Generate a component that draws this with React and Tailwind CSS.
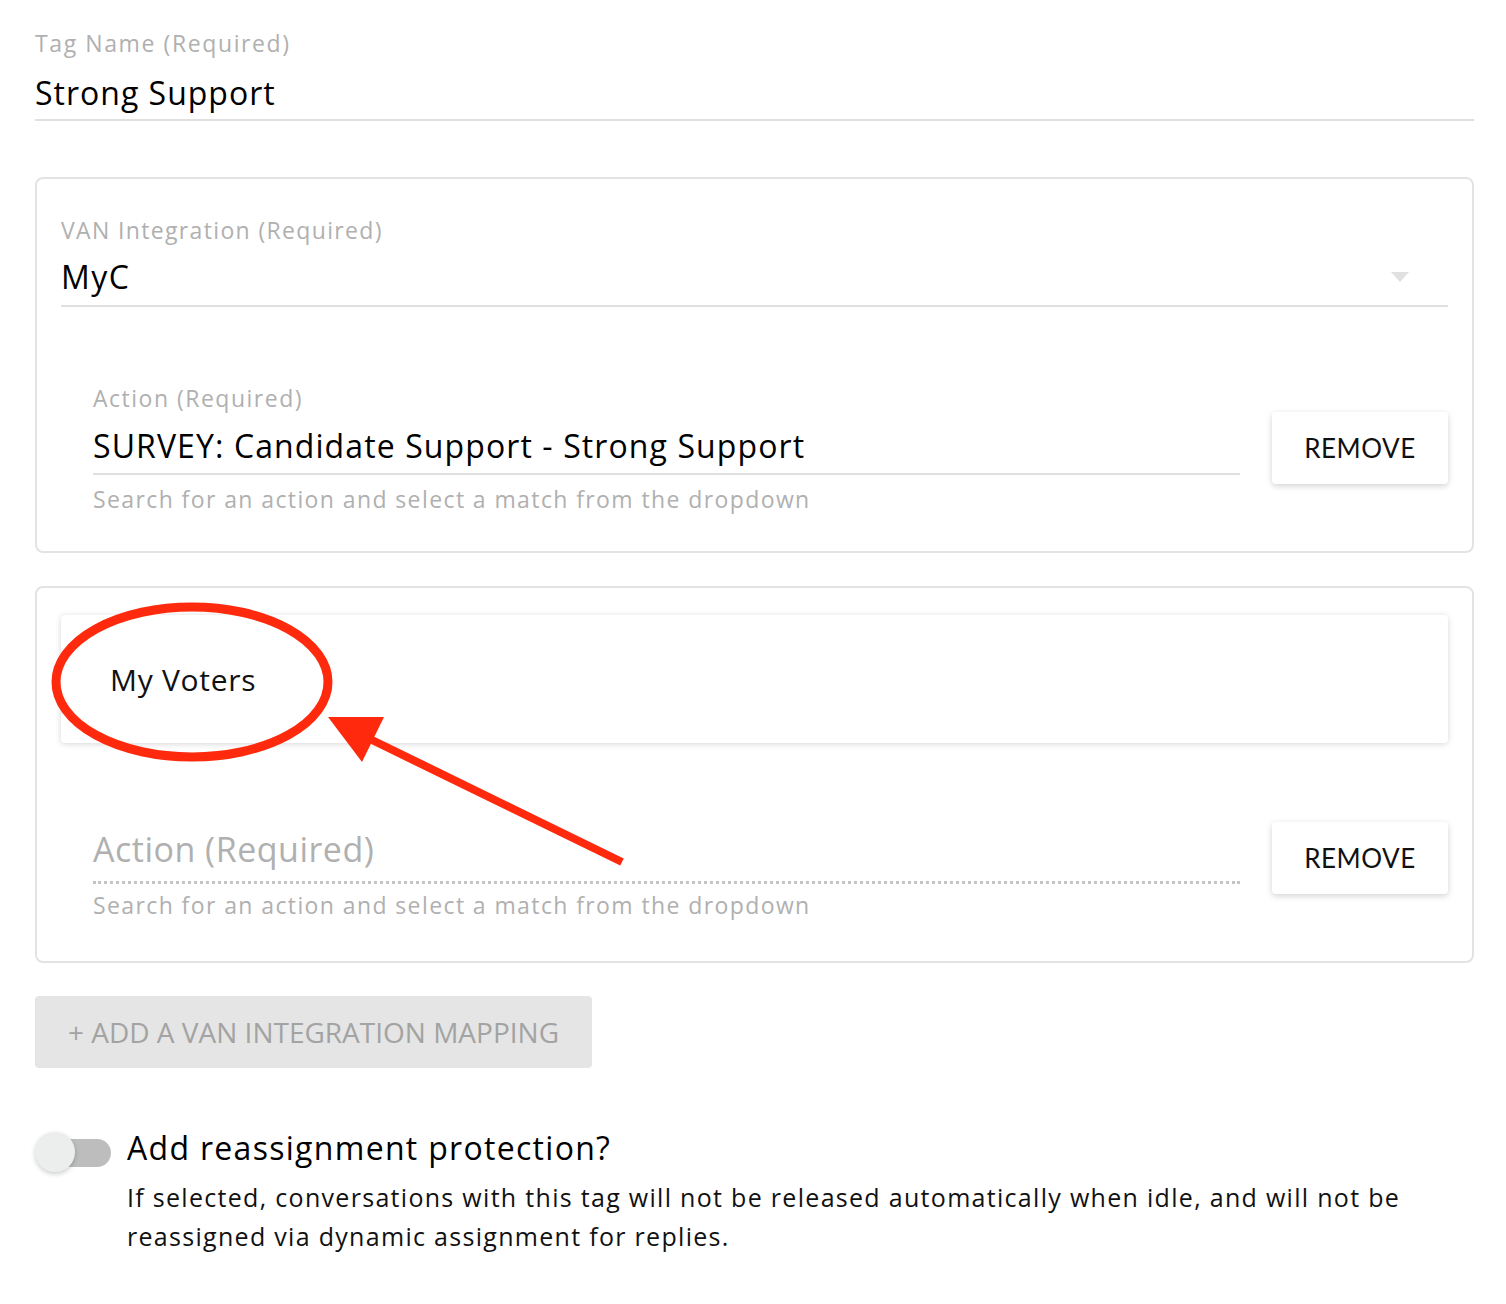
import React from "react";

const font = { fontFamily: '"Open Sans", "Liberation Sans", sans-serif' };

function RemoveButton() {
  return (
    <button className="w-[176px] h-[72px] shrink-0 bg-white rounded-[4px] shadow-[0_2px_6px_rgba(0,0,0,0.18)] text-[26px] text-[#111] tracking-[0.5px] font-['Lato',sans-serif]">
      REMOVE
    </button>
  );
}

function ActionRow({ value }) {
  return (
    <div className="flex items-start gap-[32px] pl-[32px]">
      <div className="flex-1">
        {value ? (
          <>
            <div className="text-[23px] text-[#b0b0b0] leading-[30px] tracking-[1.5px]">Action (Required)</div>
            <div className="text-[32px] text-black leading-[40px] tracking-[1.1px] mt-[13px] pb-[7px] border-b-2 border-[#e0e0e0]">{value}</div>
          </>
        ) : (
          <div className="pt-[6px]">
            <div className="text-[34px] text-[#b0b0b0] leading-[42px] tracking-[0.5px] pb-[11px] border-b-[3px] border-dotted border-[#c4c4c4]">Action (Required)</div>
          </div>
        )}
        <div className={`text-[23px] text-[#b0b0b0] leading-[30px] tracking-[1.4px] ${value ? "mt-[9px]" : "mt-[6px]"}`}>Search for an action and select a match from the dropdown</div>
      </div>
      <div className={value ? "pt-[29px]" : "pt-[0px]"}>
        <RemoveButton />
      </div>
    </div>
  );
}

export default function App() {
  return (
    <div className="relative w-[1506px] h-[1304px] bg-white" style={font}>
      <div className="px-[35px] pt-[28px] w-[1509px]">
        <div className="w-[1439px]">
          <div className="text-[23px] text-[#b0b0b0] leading-[30px] tracking-[1.6px]">Tag Name (Required)</div>
          <div className="text-[32px] text-black leading-[40px] tracking-[1px] mt-[15px] pb-[6px] border-b-2 border-[#e0e0e0]">Strong Support</div>

          <div className="mt-[56px] border-2 border-[#e2e4e3] rounded-[8px] pl-[24px] pr-[24px] pt-[36px] pb-[37px]">
            <div className="text-[23px] text-[#b0b0b0] leading-[30px] tracking-[1.35px]">VAN Integration (Required)</div>
            <div className="flex items-center justify-between mt-[12px] pb-[8px] border-b-2 border-[#e0e0e0]">
              <span className="text-[32px] text-black leading-[40px] tracking-[1.5px]">MyC</span>
              <svg width="20" height="12" viewBox="0 0 20 12" className="mr-[38px]"><path d="M1 1h18l-9 10z" fill="#e0e0e0" /></svg>
            </div>
            <div className="mt-[76px]">
              <ActionRow value="SURVEY: Candidate Support - Strong Support" />
            </div>
          </div>

          <div className="mt-[33px] border-2 border-[#e2e4e3] rounded-[8px] pl-[24px] pr-[24px] pt-[27px] pb-[41px]">
            <div className="h-[128px] rounded-[4px] bg-white shadow-[0_1px_6px_rgba(0,0,0,0.16)] flex items-center pl-[49px]">
              <span className="text-[30px] text-[#111] tracking-[0.7px]">My Voters</span>
            </div>
            <div className="mt-[79px]">
              <ActionRow />
            </div>
          </div>

          <button className="mt-[33px] h-[72px] w-[557px] rounded-[4px] bg-[#e5e5e5] text-[28px] text-[#a3a3a3]">
            + ADD A VAN INTEGRATION MAPPING
          </button>

          <div className="mt-[58px] flex items-start">
            <div className="relative w-[92px] h-[48px] shrink-0">
              <div className="absolute left-[20px] top-[13px] w-[56px] h-[28px] rounded-full bg-[#bdbdbd]" />
              <div className="absolute left-0 top-[6px] w-[40px] h-[40px] rounded-full bg-[#eceeed] shadow-[0_2px_5px_rgba(0,0,0,0.2)]" />
            </div>
            <div>
              <div className="text-[32px] text-black leading-[44px] tracking-[1.3px]">Add reassignment protection?</div>
              <div className="text-[25px] text-[#111] leading-[39px] tracking-[1.3px] mt-[8px] w-[1300px]">
                If selected, conversations with this tag will not be released automatically when idle, and will not be reassigned via dynamic assignment for replies.
              </div>
            </div>
          </div>
        </div>
      </div>

      <svg className="absolute left-0 top-0 pointer-events-none" width="1506" height="1304">
        <ellipse cx="192" cy="682" rx="136" ry="75" fill="none" stroke="#ff2a0d" strokeWidth="9" />
        <line x1="622" y1="862" x2="370" y2="739" stroke="#ff2a0d" strokeWidth="8" />
        <polygon points="328,717 384,717 362,762" fill="#ff2a0d" />
      </svg>
    </div>
  );
}
